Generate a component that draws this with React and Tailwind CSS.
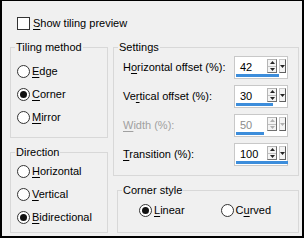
import React from "react";

function Radio({ checked }) {
  return (
    <span className="w-[13px] h-[13px] rounded-full border border-[#333] bg-white flex items-center justify-center shrink-0">
      {checked && <span className="w-[7px] h-[7px] rounded-full bg-[#111]" />}
    </span>
  );
}

function Option({ checked, pre = "", u, rest }) {
  return (
    <div className="flex items-center gap-[2px] h-[13px]">
      <Radio checked={checked} />
      <span className="leading-[13px] whitespace-nowrap">
        {pre}
        <u className="underline-offset-2">{u}</u>
        {rest}
      </span>
    </div>
  );
}

function Group({ title, className, children }) {
  return (
    <fieldset className={"border border-[#d8d8d8] p-0 m-0 " + className}>
      <legend className="ml-[4px] px-[1px] leading-[14px]">{title}</legend>
      {children}
    </fieldset>
  );
}

function Spin({ value, bar, disabled }) {
  const arrow = disabled ? "#b0b0b0" : "#222";
  return (
    <div className="relative w-[54px] h-[23px] bg-white border border-[#c8c8c8] flex items-start pt-[1px]">
      <span className={"pl-[5px] pt-[3px] w-[32px] leading-[13px] " + (disabled ? "text-[#8c8c8c]" : "")}>{value}</span>
      <div className="mt-[1px] w-[10px] h-[14px] flex flex-col border border-[#b5b5b5] border-r-[#707070] border-b-[#707070] bg-[#f4f4f4]">
        <div className="flex-1 flex items-center justify-center border-b border-[#c0c0c0]">
          <svg width="5" height="3" viewBox="0 0 5 3"><path d="M0 3 L2.5 0 L5 3 Z" fill={arrow} /></svg>
        </div>
        <div className="flex-1 flex items-center justify-center">
          <svg width="5" height="3" viewBox="0 0 5 3"><path d="M0 0 L2.5 3 L5 0 Z" fill={arrow} /></svg>
        </div>
      </div>
      <div className="mt-[1px] ml-[2px] w-[7px] h-[14px] flex items-center justify-center border border-[#c8c8c8] border-r-[#606060] border-b-[#606060] bg-[#f4f4f4]">
        <svg width="5" height="3" viewBox="0 0 5 3"><path d="M0 0 L2.5 3 L5 0 Z" fill={arrow} /></svg>
      </div>
      <div className="absolute left-[1px] bottom-[1px] h-[3px] bg-[#3c8ddb]" style={{ width: bar }} />
    </div>
  );
}

function Row({ label, value, bar, disabled }) {
  return (
    <div className="flex items-center h-[23px]">
      <span className={"flex-1 whitespace-nowrap " + (disabled ? "text-[#a0a0a0]" : "")}>{label}</span>
      <Spin value={value} bar={bar} disabled={disabled} />
    </div>
  );
}

export default function App() {
  return (
    <div className="w-[306px] h-[241px] bg-white">
      <div className="w-[304px] h-[238px] bg-[#f0f0f0] border-black border-t border-x-2 border-b-2 font-['Liberation_Sans',sans-serif] text-[11px] text-black">
        {/* Preview checkbox */}
        <div className="pl-[15px] pt-[16px] flex items-center gap-[3px] h-[29px]">
          <span className="w-[13px] h-[13px] border border-[#333] bg-white" />
          <span className="leading-[13px]">
            <u className="underline-offset-2">S</u>how tiling preview
          </span>
        </div>

        <div className="flex pl-[8px] gap-[5px] mt-[10px]">
          {/* Left column */}
          <div className="flex flex-col w-[98px]">
            <Group title="Tiling method" className="h-[98px]">
              <div className="pl-[6px] pt-[11px] flex flex-col gap-[10px]">
                <Option u="E" rest="dge" />
                <Option checked u="C" rest="orner" />
                <Option u="M" rest="irror" />
              </div>
            </Group>
            <Group title="Direction" className="h-[88px] mt-[7px]">
              <div className="pl-[6px] pt-[6px] flex flex-col gap-[10px]">
                <Option u="H" rest="orizontal" />
                <Option u="V" rest="ertical" />
                <Option checked u="B" rest="idirectional" />
              </div>
            </Group>
          </div>

          {/* Right column */}
          <div className="flex flex-col w-[186px]">
            <Group title="Settings" className="h-[136px]">
              <div className="pl-[9px] pr-[10px] pt-[2px] flex flex-col gap-[6px]">
                <Row label={<>H<u className="underline-offset-2">o</u>rizontal offset (%):</>} value="42" bar={43} />
                <Row label={<>Ve<u className="underline-offset-2">r</u>tical offset (%):</>} value="30" bar={37} />
                <Row label={<><u className="underline-offset-2">W</u>idth (%):</>} value="50" bar={28} disabled />
                <Row label={<><u className="underline-offset-2">T</u>ransition (%):</>} value="100" bar={52} />
              </div>
            </Group>
            <Group title="Corner style" className="h-[50px] mt-[7px] ml-[4px]">
              <div className="pl-[21px] pt-[7px] flex items-center gap-[36px]">
                <Option checked u="L" rest="inear" />
                <Option pre="C" u="u" rest="rved" />
              </div>
            </Group>
          </div>
        </div>
      </div>
    </div>
  );
}
